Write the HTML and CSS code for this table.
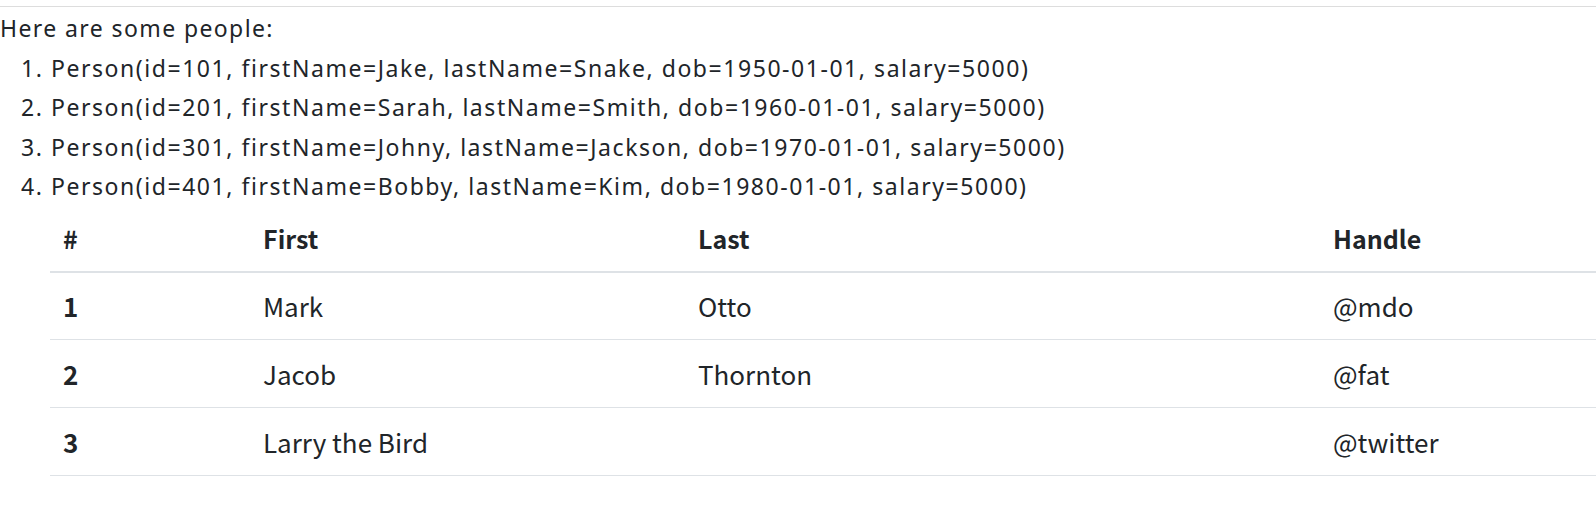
FILE: index.html
```html
<!DOCTYPE html>
<html>
<head>
<meta charset="utf-8">
<link rel="stylesheet" href="styles.css">
</head>
<body>
<hr class="rule">
<div class="intro">Here are some people:</div>
<ol class="people">
  <li>Person(id=101, firstName=Jake, lastName=Snake, dob=1950-01-01, salary=5000)</li>
  <li>Person(id=201, firstName=Sarah, lastName=Smith, dob=1960-01-01, salary=5000)</li>
  <li>Person(id=301, firstName=Johny, lastName=Jackson, dob=1970-01-01, salary=5000)</li>
  <li>Person(id=401, firstName=Bobby, lastName=Kim, dob=1980-01-01, salary=5000)</li>
</ol>
<table class="table">
  <thead>
    <tr>
      <th class="c1">#</th>
      <th class="c2">First</th>
      <th class="c3">Last</th>
      <th class="c4">Handle</th>
    </tr>
  </thead>
  <tbody>
    <tr><th>1</th><td>Mark</td><td>Otto</td><td>@mdo</td></tr>
    <tr><th>2</th><td>Jacob</td><td>Thornton</td><td>@fat</td></tr>
    <tr><th>3</th><td>Larry the Bird</td><td></td><td>@twitter</td></tr>
  </tbody>
</table>
</body>
</html>
```

FILE: styles.css
```css
html, body {
  margin: 0;
  padding: 0;
  background: #fff;
  color: #212529;
}
body {
  font-family: "Noto Sans", sans-serif;
  font-size: 23px;
  letter-spacing: 1.4px;
  line-height: 39.5px;
  overflow: hidden;
}
.rule {
  margin: 6px 0 0 0;
  border: 0;
  border-top: 1px solid #dddddd;
  height: 0;
}
.intro {
  margin-top: 2px;
}
.people {
  margin: 0;
  padding-left: 51px;
  letter-spacing: 1.55px;
}
.table {
  margin-left: 50px;
  width: 1546px;
  table-layout: fixed;
  border-collapse: collapse;
  font-family: "Noto Sans CJK KR", "Noto Sans", sans-serif;
  font-size: 26px;
  letter-spacing: 0;
  color: #212529;
}
.table th, .table td {
  text-align: left;
  padding: 0 13px;
  vertical-align: middle;
}
.table thead th {
  height: 64px;
  border-bottom: 2px solid #dee2e6;
  font-weight: 700;
  font-size: 25px;
}
.table tbody th {
  font-weight: 700;
}
.table tbody tr {
  height: 68px;
  border-bottom: 1px solid #dee2e6;
}
.c1 { width: 174px; }
.c2 { width: 409px; }
.c3 { width: 609px; }
```
